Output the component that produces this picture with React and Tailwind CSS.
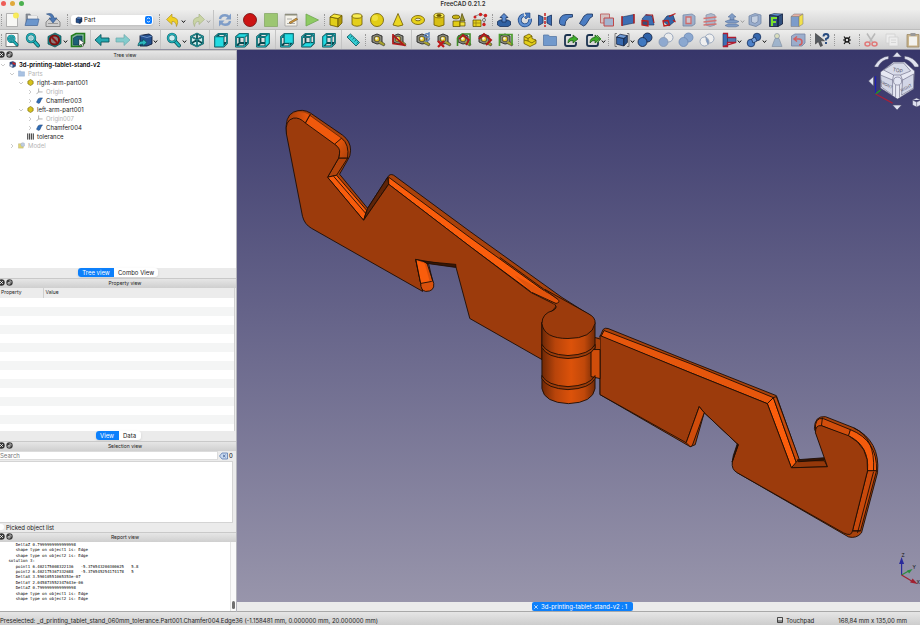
import React from "react";

const DARK = "#101c38";

/* ---------- toolbar glyphs, all on a 16 x 16 grid ---------- */

const Cube = ({ top, left, right, stroke = DARK }) => (
  <g stroke={stroke} strokeWidth="0.8" strokeLinejoin="round">
    <path d="M2 5 10 6.5V15L2 13z" fill={left} />
    <path d="M10 6.5 14 3.5V11L10 15z" fill={right} />
    <path d="M2 5 6 2 14 3.500 10 6.500z" fill={top} />
  </g>
);

const TealFrame = ({ face }) => {
  const faces = {
    front: "M2 5H10.500V14.500H2z",
    top: "M2 5 5.500 2H14L10.500 5z",
    right: "M10.500 5 14 2V11L10.500 14.500z",
    rear: "M5.500 2H14V11H5.500z",
    bottom: "M2 14.500 5.500 11H14L10.500 14.500z",
    left: "M2 5 5.500 2V11L2 14.500z",
  };
  return (
    <g strokeLinejoin="round" fill="none">
      <path d="M2 5H10.500V14.500H2zM2 5 5.500 2H14V11L10.500 14.500M10.500 5 14 2M5.500 2V11H14M5.500 11 2 14.500" stroke="#0a4a50" strokeWidth="1.800" />
      <path d="M2 5H10.500V14.500H2zM2 5 5.500 2H14V11L10.500 14.500M10.500 5 14 2" stroke="#2cc0c8" strokeWidth="0.7" />
      <path d={faces[face]} fill="#22dbe2" stroke="#0c7078" strokeWidth="0.5" />
    </g>
  );
};

const Lens = () => (
  <g>
    <path d="M8.500 8.500 13 13.500" stroke="#0a4a50" strokeWidth="3.800" strokeLinecap="round" />
    <path d="M8.500 8.500 13 13.500" stroke="#1fb4bc" strokeWidth="2.400" strokeLinecap="round" />
    <circle cx="6" cy="6" r="4" fill="#cfeef0" stroke="#0a5c64" strokeWidth="2.400" />
    <circle cx="6" cy="6" r="4" fill="none" stroke="#25b4bc" strokeWidth="1.400" />
  </g>
);

const Tape = ({ children }) => (
  <g>
    <path d="M2 4 7 2 12 4V11L7 12 2 10z" fill="#8c8c80" stroke="#222" strokeWidth="0.9" />
    <circle cx="7" cy="7" r="2.800" fill="#e8c824" stroke="#333" strokeWidth="0.7" />
    <circle cx="6.500" cy="6.500" r="1.200" fill="#eee" />
    <path d="M8 11 14 14 15 12 11 9" fill="#a8a22c" stroke="#333" strokeWidth="0.6" />
    {children}
  </g>
);

const Balls = ({ a = "#2f62a8", b = "#3f78c0", stroke = DARK }) => (
  <g stroke={stroke} strokeWidth="0.8">
    <circle cx="10.500" cy="5.500" r="4.500" fill={a} />
    <circle cx="5.500" cy="10" r="4.500" fill={b} />
  </g>
);

const Share = () => (
  <g fill="none">
    <path d="M8 3H4Q2 3 2 5v7q0 2 2 2h7q2 0 2-2v-2" stroke="#1c3350" strokeWidth="1.800" />
    <path d="M5 11Q5 5.500 10 5.500V3l5 4-5 4V8.500Q7 8 5 11z" fill="#3fae2a" stroke="#155010" strokeWidth="0.7" />
  </g>
);

const blueStroke = { stroke: "#16305c", strokeWidth: 0.8, strokeLinejoin: "round" };
const yellowStroke = { stroke: "#6b5800", strokeWidth: 0.8, strokeLinejoin: "round" };

const glyphs = {
  newDoc: (
    <g>
      <path d="M2.500 1.500h11v13h-11z" fill="#f7f7f5" stroke="#999" strokeWidth="0.7" />
      <circle cx="12" cy="3.500" r="3" fill="#f8ea4c" opacity="0.9" />
    </g>
  ),
  open: (
    <g>
      <path d="M2 2h4l1 2h6v9H2z" fill="#8a9099" stroke="#6c727c" strokeWidth="0.6" />
      <path d="M4 3.500h9V8H4z" fill="#eee" />
      <path d="M3 7h12l-1.500 6.500H1z" fill="#6b96cc" stroke="#48699a" strokeWidth="0.7" />
    </g>
  ),
  save: (
    <g>
      <path d="M1 10 4 7h8l3 3v4.500H1z" fill="#cfcfcf" stroke="#777" strokeWidth="0.8" />
      <path d="M3 11.500h10" stroke="#999" />
      <path d="M1.500 2Q8 0 9 6h3L8 11 4 6h2.500Q6 3 1.500 2z" fill="#4c78b4" stroke="#2d4f80" strokeWidth="0.6" />
    </g>
  ),
  undo: <path d="M7 2 1.500 7.500 7 12.500V9.500Q11 9 11.500 14.500 15.500 6 7 5z" fill="#f0d022" stroke="#a88a20" strokeWidth="0.6" />,
  redo: <path d="M9 2 14.500 7.500 9 12.500V9.500Q5 9 4.500 14.500.5 6 9 5z" fill="#c9d4a4" stroke="#a3ae80" strokeWidth="0.6" />,
  refresh: (
    <g fill="none" stroke="#7f9dc8" strokeWidth="2.400">
      <path d="M3 7Q3.500 3.200 8 3.200 10.500 3.200 12 5.200" />
      <path d="M13 9Q12.500 12.800 8 12.800 5.500 12.800 4 10.800" />
      <path d="M14 1.500V7.500H8.500z" fill="#7f9dc8" stroke="none" />
      <path d="M2 14.500V8.500H7.500z" fill="#7f9dc8" stroke="none" />
    </g>
  ),
  record: <circle cx="8" cy="8" r="6.500" fill="#cc1414" stroke="#6c0808" strokeWidth="0.8" />,
  stop: <path d="M1.500 1.500h13v13h-13z" fill="#9cc672" stroke="#86a868" strokeWidth="0.8" />,
  edit: (
    <g>
      <path d="M2 2h12v12H2z" fill="#f4f2ea" stroke="#999" strokeWidth="0.7" />
      <path d="M2 2h12v1.500H2z" fill="#8d8d7c" />
      <path d="M4 7h5M4 11.500h8" stroke="#999" strokeWidth="0.8" />
      <path d="M6 10.500 13.500 6l1 1.500-7 4z" fill="#d39a3c" stroke="#704c18" strokeWidth="0.6" />
    </g>
  ),
  play: <path d="M2 2 14.500 8 2 14z" fill="#8ecb62" stroke="#6fa550" strokeWidth="0.8" />,
  box: <Cube top="#f7e93c" left="#e2cf18" right="#b39c0c" stroke="#6b5800" />,
  cylinder: (
    <g {...yellowStroke}>
      <path d="M3 4v8.500Q8 16 13 12.500V4" fill="#e4cf1c" />
      <ellipse cx="8" cy="4" rx="5" ry="2.300" fill="#f8ec55" />
    </g>
  ),
  sphere: (
    <g>
      <circle cx="8" cy="8" r="6.500" fill="#e2cd16" {...yellowStroke} />
      <circle cx="6" cy="6" r="3" fill="#f0e03c" />
    </g>
  ),
  cone: <path d="M8 1.500 13 13Q8 15.500 3 13z" fill="#ebd722" {...yellowStroke} />,
  torus: (
    <g {...yellowStroke}>
      <ellipse cx="8" cy="8" rx="6.500" ry="4.500" fill="#e8d31c" />
      <ellipse cx="8" cy="7.500" rx="2.800" ry="1.300" fill="#e4e4e0" />
    </g>
  ),
  tube: (
    <g {...yellowStroke}>
      <path d="M3 3.500V13Q8 16 13 13V3.500" fill="#d8bf14" />
      <ellipse cx="8" cy="3.500" rx="5" ry="2.300" fill="#f8ec55" />
      <ellipse cx="8" cy="3.500" rx="2.300" ry="1" fill="#6b5800" />
    </g>
  ),
  primitives: (
    <g stroke="#554600" strokeWidth="0.7">
      <ellipse cx="5" cy="5" rx="3.800" ry="2" fill="#c8b414" />
      <path d="M11 1.500 14 9H9z" fill="#9c9a30" />
      <path d="M2 9h7v5.500H2z" fill="#e2cd16" />
      <path d="M9 10h5v4H9z" fill="#f0df3c" />
    </g>
  ),
  builder: (
    <g>
      <path d="M1 8h8v6.500H1z" fill="#e6d21c" stroke="#554600" strokeWidth="0.7" />
      <path d="M4 8v6M1 11h8" stroke="#8a7810" strokeWidth="0.7" />
      <path d="M3 4 9 2 13 4 12 12" stroke="#777" strokeWidth="0.8" fill="none" />
      <g fill="#cc2020">
        <circle cx="8.500" cy="2.500" r="1.700" />
        <circle cx="13.500" cy="3.500" r="1.700" />
        <circle cx="3" cy="5" r="1.500" />
        <circle cx="12" cy="12.500" r="1.700" />
      </g>
      <circle cx="12" cy="8" r="1.500" fill="#eee" stroke="#333" strokeWidth="0.6" />
    </g>
  ),
  extrude: (
    <g {...blueStroke}>
      <path d="M1.500 9.500 4 8h8l2.500 1.500V13L12 14.500H4L1.500 13z" fill="#2f60a2" />
      <path d="M8 1.500 12 5.500H10V10H6V5.500H4z" fill="#5b8bd0" />
    </g>
  ),
  revolve: (
    <g>
      <path d="M7 3a5.200 5.200 0 1 0 6 4" fill="none" stroke="#1e4684" strokeWidth="3.800" />
      <path d="M7 3a5.200 5.200 0 1 0 6 4" fill="none" stroke="#5f90d2" strokeWidth="2.400" />
      <path d="M8 1h5v5L11 5 9 7 7.500 5.500 9.500 3.500z" fill="#4678c0" stroke="#1e4684" strokeWidth="0.6" />
    </g>
  ),
  mirror: (
    <g {...blueStroke}>
      <path d="M1.500 3 6 5v6l-4.500 2.500z" fill="#3c6eb4" />
      <path d="M14.500 3 10 5v6l4.500 2.500z" fill="#3c6eb4" />
      <path d="M8 1v14" stroke="#c82828" strokeWidth="1.600" strokeDasharray="3 1" />
    </g>
  ),
  fillet: <path d="M1.500 9Q2 3 8 2.500l6.500 0V5Q10.500 5 9.500 7 7 9 7 13.500L3 13Q1 12 1.500 9z" fill="#4a7cc2" {...blueStroke} />,
  chamfer: <path d="M1.500 11.500 6 4 9 2h5.500V4.500L12 6 8 12.500 5.500 14z" fill="#4a7cc2" {...blueStroke} />,
  makeFace: (
    <g>
      <path d="M1.500 2h9v9h-9z" fill="#d4c2c2" stroke="#c06a6a" />
      <path d="M5 6h9.500v8H5z" fill="#a4b4cf" stroke="#c04848" />
    </g>
  ),
  ruled: (
    <g>
      <path d="M2 5 14 2.500V11L2 13.500z" fill="#3c6eb4" stroke="#16305c" strokeWidth="0.6" />
      <path d="M2 4v10M14 2v9.500" stroke="#b81c1c" strokeWidth="1.400" />
    </g>
  ),
  loft: (
    <g>
      <path d="M2 7 6 2.500 12 4 14 13H9z" fill="#3c6eb4" stroke="#16305c" strokeWidth="0.6" />
      <path d="M2 8.500 8 9V14L2 13z" fill="#3a4c78" stroke="#c01c1c" strokeWidth="1.300" />
      <path d="M5.500 3H12.500L14 11" fill="none" stroke="#a01c24" strokeWidth="1.200" />
    </g>
  ),
  sweep: (
    <g>
      <path d="M2 9 6 4 12 3 14 9 8 14z" fill="#3464a8" stroke="#16305c" strokeWidth="0.7" />
      <path d="M2 9 7 8.500 8.500 13 3 14zM8 4.500 14.500 1.500M12 8l2.500 2" stroke="#c01c1c" strokeWidth="1.300" fill="none" />
    </g>
  ),
  section: (
    <g opacity="0.65">
      <path d="M2 3 11 2 14 4V12L11 14H2z" fill="#7c98c2" stroke="#405c8c" strokeWidth="0.8" />
      <path d="M5 5h5v6.500H5z" fill="#c8b8c4" stroke="#c83232" strokeWidth="1.300" />
    </g>
  ),
  cross: (
    <g opacity="0.7">
      <path d="M4 3 9 1.500 13 3V13L8 14.500 4 13z" fill="#98a8c4" stroke="#57688c" strokeWidth="0.7" />
      <path d="M1.500 6.500 14.500 5M1.500 10 14.500 8.500M1.500 13 14.500 12" stroke="#d04848" strokeWidth="1.300" />
    </g>
  ),
  offset: (
    <g fill="#809cc6" stroke="#54709c" strokeWidth="0.6">
      <path d="M8 1.500 12 5H10V8H6V5H4z" />
      <path d="M1 9.500 5 8h6l4 1.500-3 1.500H4z" />
      <path d="M1 13.500 4 12h8l3 1.500-3 1.300H4z" />
    </g>
  ),
  thickness: (
    <g opacity="0.7">
      <path d="M2 4 8 1.500 14 3V11.500L9 14.500 2 12.500z" fill="#7d9ac8" stroke="#45608c" strokeWidth="0.8" />
      <path d="M4.500 4.500 11 3.500V9.500L8 11.500 4.500 10z" fill="#b9c8e0" stroke="#45608c" strokeWidth="0.7" />
    </g>
  ),
  project: (
    <g>
      <path d="M1.500 3 10 4V14.500H1.500zM10 4 14.500 2V12L10 14.500z" fill="#31507f" stroke={DARK} strokeWidth="0.8" />
      <path d="M1.500 3 6 1.500 14.500 2 10 4z" fill="#5f90d0" stroke={DARK} strokeWidth="0.5" />
      <path d="M4 14V6h5M4 10h4" stroke="#7be02c" strokeWidth="2" fill="none" />
    </g>
  ),
  color: (
    <g stroke="#777" strokeWidth="0.5">
      <path d="M2 4.500h8v10H2z" fill="#7c9cca" />
      <path d="M2 4.500 5 2h9l-4 2.500z" fill="#e6b0a4" />
      <path d="M10 4.500 14 2v10l-4 2.500z" fill="#f2e04c" />
    </g>
  ),

  fitAll: (
    <g>
      <path d="M2 1.500h12v13H2z" fill="#fafafa" stroke="#666" strokeWidth="0.8" />
      <g transform="translate(2.500 2) scale(0.8)">
        <Lens />
        <circle cx="6" cy="6" r="3" fill="#2a9aa4" />
      </g>
    </g>
  ),
  fitSel: <g><Lens /><circle cx="6" cy="6" r="2" fill="#9cccd0" /></g>,
  drawStyle: (
    <g>
      <path d="M1 4.500 8 1 14 4V11.500L8 15 1 12z" fill="#128c90" stroke="#0b4448" strokeWidth="0.7" />
      <circle cx="7.500" cy="8" r="4.600" fill="#8c7c7c" stroke="#7c1010" strokeWidth="2" />
      <path d="M4.500 5 10.500 11" stroke="#8c1414" strokeWidth="2" />
    </g>
  ),
  bbox: (
    <g>
      <path d="M1.500 4 6 1.500H14.500V11L11 14.500H1.500z" fill="#7fb49c" stroke="#237c1c" strokeWidth="1.600" />
      <path d="M3.500 6 7 4h5v6l-3 3H3.500z" fill="#1d5f78" stroke="#0e3444" strokeWidth="0.6" />
      <path d="M9 7v7l2-2 1.500 2.500 1.200-.6L12.500 11.500H15z" fill="#fff" stroke="#222" strokeWidth="0.5" />
    </g>
  ),
  back: <path d="M1 8 7 2.500V6H15v4H7v3.500z" fill="#24a8b0" stroke="#0c565c" strokeWidth="0.9" />,
  forward: <path d="M15 8 9 2.500V6H1v4H9v3.500z" fill="#84cccd" stroke="#6aa8aa" strokeWidth="0.7" />,
  linkNav: (
    <g>
      <path d="M3 3.500 12 2 15 4V12L10 14H3z" fill="#24508e" stroke={DARK} strokeWidth="0.9" />
      <path d="M3 3.500 10 5.500 15 4" fill="none" stroke="#7aa2d8" strokeWidth="0.8" />
      <path d="M1 14Q1 9 6 9V7l4 3.500L6 14V12Q3 12 1 14z" fill="#2cb8c0" stroke="#0c4c54" strokeWidth="0.7" />
    </g>
  ),
  iso: (
    <g fill="#cfeeee" strokeLinejoin="round">
      <path d="M8 1.500 14 4.500V11.500L8 14.500 2 11.500V4.500zM2 4.500 8 7.500 14 4.500M8 1.500V14.500M2 11.500 8 8 14 11.500" stroke="#0a4a50" strokeWidth="1.700" />
      <path d="M8 1.500 14 4.500V11.500L8 14.500 2 11.500V4.500zM2 4.500 8 7.500 14 4.500M8 7.500V14.500" fill="none" stroke="#2cb4ba" strokeWidth="0.7" />
    </g>
  ),
  zoom: <Lens />,
  front: <TealFrame face="front" />,
  top: <TealFrame face="top" />,
  right: <TealFrame face="right" />,
  rear: <TealFrame face="rear" />,
  bottom: <TealFrame face="bottom" />,
  left: <TealFrame face="left" />,
  ruler: (
    <g>
      <path d="M2 5 5.500 2 14.500 10.500 11 14z" fill="#34ccd2" stroke="#0c5c64" strokeWidth="0.9" />
      <path d="M7 4 5.500 5.500M9 6 7.500 7.500M11 8 9.500 9.500M13 10l-1.500 1.500" stroke="#0c5c64" strokeWidth="0.7" />
    </g>
  ),
  m1: <Tape />,
  m2: <Tape><path d="M2 2V11.500L13 13 3 4" fill="none" stroke="#b01818" strokeWidth="1.700" /></Tape>,
  m3: <Tape><path d="M9 5q1-4 4-3l1-1v4h-4M14.500 6q-1 4-4 3" fill="none" stroke="#5f86bc" strokeWidth="1.500" /></Tape>,
  m4: <Tape><path d="M2 9 8 15M8 9 2 15" stroke="#c01818" strokeWidth="2.200" /></Tape>,
  m5: <Tape><path d="M1.500 14V6L6 2h8v11" fill="none" stroke="#3f8c28" strokeWidth="1.600" /><path d="M3 7 7 3 13 8 10 13" fill="none" stroke="#b01818" strokeWidth="1.700" /></Tape>,
  m6: <Tape><path d="M2 7 7 2 14 8 9 13" fill="none" stroke="#b01818" strokeWidth="2" /></Tape>,
  m7: <Tape><path d="M1.500 14V2.500H14V13" fill="none" stroke="#4c9c30" strokeWidth="1.700" /></Tape>,
  part: (
    <g {...yellowStroke}>
      <path d="M2 4.500 7 2 10 4V6.500L14 8V11.500L8 14.500 2 11.500z" fill="#e4cf1a" />
      <path d="M2 4.500 6 6.500 10 4M6 6.500V9L10 11 14 8M6 9 2 8" fill="none" />
    </g>
  ),
  group: <path d="M1.500 3h5l1 1.500h7V13.500h-13z" fill="#7199cc" stroke="#5878a6" strokeWidth="0.8" />,
  share: <Share />,
  shareMany: <g><Share /><path d="M12 3 16 7 12 11" fill="none" stroke="#2c8c1c" strokeWidth="0.9" /></g>,
  compound: (
    <g>
      <path d="M3 1.500H1v13h2M13 1.500h2v13h-2" fill="none" stroke="#666" strokeWidth="0.8" />
      <g transform="translate(.8 .5) scale(.9)"><Cube top="#6f9cd8" left="#3668ae" right="#234c86" /></g>
    </g>
  ),
  bool: <Balls />,
  cut: <Balls a="#ececec" b="#8fa9cf" stroke="#8496b0" />,
  union: <Balls a="#8ba8d0" b="#8ba8d0" stroke="#6c88b2" />,
  inter: (
    <g stroke="#8c9cb4" strokeWidth="0.8">
      <circle cx="10.500" cy="6.500" r="4.500" fill="#efefef" />
      <circle cx="5.500" cy="9.500" r="4.500" fill="#efefef" />
      <path d="M7 5.500Q6.500 8 9 12.500 11 9 7 5.500z" fill="#7898c8" />
    </g>
  ),
  join: (
    <g stroke="#16305c" strokeWidth="0.6">
      <path d="M2 1.500h4.500v13H2z" fill="#3c6eb4" />
      <path d="M6.500 5.500h8.500v5H6.500z" fill="#5078b0" />
      <path d="M2 1.500h4.500v4H15M15 10.500H6.500v4H2z" fill="none" stroke="#b01c30" strokeWidth="1.300" />
    </g>
  ),
  split: (
    <g {...blueStroke}>
      <circle cx="11" cy="5" r="3.800" fill="#3668ae" />
      <circle cx="5" cy="11" r="3.800" fill="#4c80c8" />
      <path d="M5.500 7 9 5 11 9 7 11z" fill="#79a3dc" />
    </g>
  ),
  check: (
    <g opacity="0.75" stroke="#6a7c94" strokeWidth="0.7">
      <circle cx="8" cy="4" r="2.500" fill="#d8ddb0" />
      <path d="M6 6.500h4l3 8H3z" fill="#8ca8c8" />
    </g>
  ),
  defeat: (
    <g opacity="0.8">
      <path d="M1.500 4 5 2h10V11L12 14H1.500z" fill="#8ca2c8" stroke="#5a6c94" strokeWidth="0.8" />
      <path d="M4 7h5q3 0 3 3t-3 3M7 4.500 4 7l3 2.500" fill="none" stroke="#d04040" strokeWidth="1.500" />
    </g>
  ),
  whats: (
    <g>
      <path d="M1.500 1.500V12l2.800-2.500L6.500 14.500l2-1L6.500 8.800h4z" fill="#555a60" stroke="#333" strokeWidth="0.6" />
      <path d="M9.500 4.500Q9.500 2 12 2t2.500 2.500Q14.500 6 12 7v1.500M12 10v2" fill="none" stroke="#284c80" strokeWidth="1.900" />
    </g>
  ),
  star: (
    <g stroke="#111" fill="none">
      <circle cx="8" cy="8" r="2" strokeWidth="1.500" />
      <path d="M5 4.500 6.500 6.500M11 4.500 9.500 6.500M4 8h1.500M12 8h-1.500M5 12l1.500-2M11 12 9.500 10" strokeWidth="1.200" />
    </g>
  ),
  scissors: (
    <g fill="none">
      <path d="M4 1.500 10 11M12 1.500 6 11" stroke="#b8b8b8" strokeWidth="1.500" />
      <ellipse cx="4.500" cy="12" rx="2.500" ry="2" stroke="#e07878" strokeWidth="1.500" />
      <ellipse cx="11.500" cy="12" rx="2.500" ry="2" stroke="#e07878" strokeWidth="1.500" />
    </g>
  ),
  copy: (
    <g stroke="#d0d0d0" strokeWidth="0.8" fill="#ececec">
      <path d="M2 2h9v9H2z" />
      <path d="M5 5h9v9H5zM7 8h5M7 10.500h5" />
    </g>
  ),
  paste: (
    <g>
      <path d="M2 2.500h12v12.500H2z" fill="#c9b48c" stroke="#9c8a68" strokeWidth="0.8" />
      <path d="M4 4.500h8v9H4z" fill="#f2f2ee" />
      <path d="M5.500 1h5v3h-5z" fill="#999" />
    </g>
  ),
};

const Glyph = ({ name }) => (
  <svg viewBox="0 0 16 16" className="h-4 w-4 shrink-0" aria-hidden="true">
    {glyphs[name]}
  </svg>
);

const Group = ({ names, width }) => (
  <div className={`flex shrink-0 ${width}`}>
    {names.split(" ").map((n) => (
      <button key={n} type="button" aria-label={n} className="flex flex-1 items-center justify-center">
        <Glyph name={n} />
      </button>
    ))}
  </div>
);

const Drop = ({ name, faded, width = "w-[25px]", pad = "pl-1" }) => (
  <button type="button" aria-label={name} className={`flex shrink-0 items-center ${width} ${pad}`}>
    <Glyph name={name} />
    <svg viewBox="0 0 5 5" className={`mt-1 h-[5px] w-[5px] shrink-0 ${faded ? "opacity-30" : ""}`} aria-hidden="true">
      <path d="M.8 1.500 2.500 3.500 4.200 1.500" fill="none" stroke="#111" strokeWidth="1" />
    </svg>
  </button>
);

const Sep = () => (
  <div className="flex w-1 shrink-0 justify-center">
    <span className="w-px bg-[#c4c4c4]" />
  </div>
);

const Handle = ({ width = "w-1" }) => (
  <div className={`flex shrink-0 items-center justify-center ${width}`}>
    <span className="h-3 border-l border-dotted border-[#9a9a9a]" />
  </div>
);

function Toolbars() {
  return (
    <>
      <div className="flex h-5 overflow-hidden border-b border-[#bdbdbd] bg-gradient-to-b from-[#ededec] to-[#d0d0d0]">
        <Handle width="w-[2px]" />
        <Group names="newDoc open save" width="w-[61px]" />
        <Handle width="w-2" />
        <div className="my-auto flex h-[10px] w-[82px] shrink-0 items-center rounded-[3px] bg-white shadow-sm">
          <svg viewBox="0 0 16 16" className="ml-1 h-2 w-2 shrink-0" aria-hidden="true">
            <Cube top="#4f80c4" left="#234f8c" right="#173968" />
          </svg>
          <select aria-label="Workbench" className="h-full min-w-0 flex-1 appearance-none bg-transparent pl-px text-[6px] leading-[10px] text-[#222] outline-none" defaultValue="Part">
            <option>Part</option>
          </select>
          <svg viewBox="0 0 7 8" className="mr-px h-2 w-[7px] shrink-0" aria-hidden="true">
            <rect width="7" height="8" rx="2" fill="#0a7bff" />
            <path d="M2 3.200 3.500 1.700 5 3.200M2 4.800 3.500 6.300 5 4.800" fill="none" stroke="#fff" strokeWidth="0.9" />
          </svg>
        </div>
        <Handle width="w-3" />
        <Drop name="undo" width="w-6" pad="pl-0" />
        <Drop name="redo" faded width="w-[22px]" pad="pl-px" />
        <Sep />
        <Group names="refresh" width="w-5" />
        <Handle width="w-[5px]" />
        <Group names="record stop edit play" width="w-[82px]" />
        <Handle />
        <Group names="box cylinder sphere cone torus tube primitives builder" width="w-[164px]" />
        <Handle />
        <Group names="extrude revolve mirror fillet chamfer makeFace ruled loft sweep section cross" width="w-[226px]" />
        <Drop name="offset" faded />
        <Group names="thickness project color" width="w-[62px]" />
      </div>
      <div className="flex h-5 overflow-hidden border-b border-[#8f8fa0] bg-gradient-to-b from-[#ededec] to-[#d0d0d0]">
        <Handle width="w-[2px]" />
        <Group names="fitAll fitSel" width="w-[41px]" />
        <Drop name="drawStyle" />
        <Group names="bbox" width="w-5" />
        <Sep />
        <Group names="back forward" width="w-[41px]" />
        <Drop name="linkNav" />
        <Sep />
        <Drop name="zoom" />
        <Group names="iso" width="w-5" />
        <Sep />
        <Group names="front top right" width="w-[62px]" />
        <Sep />
        <Group names="rear bottom left" width="w-[62px]" />
        <Sep />
        <Group names="ruler" width="w-5" />
        <Handle width="w-[5px]" />
        <Group names="m1 m2" width="w-[41px]" />
        <Sep />
        <Group names="m3 m4 m5 m6 m7" width="w-[103px]" />
        <Handle />
        <Group names="part group share" width="w-[61px]" />
        <Drop name="shareMany" />
        <Handle />
        <Drop name="compound" />
        <Group names="bool cut union inter" width="w-[82px]" />
        <Drop name="join" />
        <Drop name="split" />
        <Group names="check defeat" width="w-[41px]" />
        <Handle />
        <Group names="whats" width="w-5" />
        <Handle width="w-[5px]" />
        <Group names="star" width="w-5" />
        <Handle />
        <Group names="scissors copy paste" width="w-[62px]" />
      </div>
    </>
  );
}

/* ---------- docked panels ---------- */

const DockTitle = ({ children }) => (
  <div className="relative flex h-[10px] shrink-0 items-start justify-center border-t border-[#c9c9c9] bg-gradient-to-b from-[#e6e6e6] to-[#cfcfcf] pl-[14px]">
    <div className="absolute -left-[2px] top-0 flex gap-[1px]">
      <button type="button" aria-label="Close panel" className="h-[7px] w-[7px]">
        <svg viewBox="0 0 7 7">
          <circle cx="3.500" cy="3.500" r="3.200" fill="#333" />
          <path d="M2.200 2.200 4.800 4.800M4.800 2.200 2.200 4.800" stroke="#fff" strokeWidth="0.9" />
        </svg>
      </button>
      <button type="button" aria-label="Float panel" className="h-[7px] w-[7px]">
        <svg viewBox="0 0 7 7">
          <circle cx="3.500" cy="3.500" r="3.200" fill="#3c3c3c" />
          <path d="M2 3.500h2v1.500H2zM3 2h2v1.800" fill="none" stroke="#ddd" strokeWidth="0.7" />
        </svg>
      </button>
    </div>
    <h2 className="text-[5px] leading-[8px] text-[#222]">{children}</h2>
  </div>
);

const Tabs = ({ left, right, first, second }) => (
  <div className="flex h-[10px] shrink-0 justify-center bg-[#ebebeb] text-[6px] leading-[9px]">
    <div className="flex h-[9px] overflow-hidden rounded-[3px] bg-white shadow-sm">
      <button type="button" className={`${left} bg-[#0d80fb] text-center text-white`}>{first}</button>
      <button type="button" className={`${right} text-center text-[#222]`}>{second}</button>
    </div>
  </div>
);

const treeGlyphs = {
  doc: (
    <g>
      <path d="M2 3 9 1 15 4V12L9 15 2 12z" fill="#2b4c88" stroke="#1b2c50" />
      <path d="M8 2 15 5 14 9 8 7z" fill="#c22" />
      <path d="M3 8h5v5H3z" fill="#dfe6f4" />
    </g>
  ),
  folder: <path d="M1 2h5l1 2h8v10H1z" fill="#a9c2e2" stroke="#8fabcf" />,
  part: <path d="M2 5 8 1 14 5V11L8 15 2 11z" fill="#d6c21c" stroke="#7a6a08" strokeWidth="1.500" />,
  origin: <path d="M6 1V9L1 14M6 9H15" fill="none" stroke="#888" strokeWidth="1.500" />,
  chamfer: <path d="M1 12 5 4 9 2H15L12 6 9 13 6 15z" fill="#2f6cb4" stroke="#1b3f74" />,
  sheet: (
    <g>
      <path d="M0 1h16v14H0z" fill="#ddd" />
      <path d="M1.500 1v14M5.800 1v14M10.200 1v14M14.500 1v14" stroke="#333" strokeWidth="2" />
    </g>
  ),
  model: (
    <g opacity="0.75">
      <path d="M1 4h11v10H1z" fill="#d8c840" stroke="#99905a" />
      <circle cx="11" cy="6" r="4.500" fill="#a9bcd8" stroke="#8092b0" />
    </g>
  ),
};

const tree = [
  ["pl-0", "open", "doc", "3d-printing-tablet-stand-v2", "font-semibold text-black"],
  ["pl-[9px]", "open", "folder", "Parts", "text-[#b4b4b4]"],
  ["pl-[18px]", "open", "part", "right-arm-part001", "text-[#1a1a1a]"],
  ["pl-[27px]", "closed", "origin", "Origin", "text-[#b4b4b4]"],
  ["pl-[27px]", "closed", "chamfer", "Chamfer003", "text-[#1a1a1a]"],
  ["pl-[18px]", "open", "part", "left-arm-part001", "text-[#1a1a1a]"],
  ["pl-[27px]", "closed", "origin", "Origin007", "text-[#b4b4b4]"],
  ["pl-[27px]", "closed", "chamfer", "Chamfer004", "text-[#1a1a1a]"],
  ["pl-[18px]", "none", "sheet", "tolerance", "text-[#1a1a1a]"],
  ["pl-[9px]", "closed", "model", "Model", "text-[#b4b4b4]"],
];

const arrows = { open: "M1 2 3 4 5 2", closed: "M2 1 4 3 2 5", none: "" };

const report = [
  "    DeltaZ 0.7999999999999998",
  "    shape type on object1 is: Edge",
  "    shape type on object2 is: Edge",
  " solution 3:",
  "    point1 6.402175008322136   -5.376543200300625   5.8",
  "    point2 6.402175367332688   -5.376545254174178   5",
  "    DeltaX 3.59010551065353e-07",
  "    DeltaY 2.045873552347643e-06",
  "    DeltaZ 0.7999999999999998",
  "    shape type on object1 is: Edge",
  "    shape type on object2 is: Edge",
];

function Sidebar() {
  return (
    <aside className="flex w-[237px] shrink-0 flex-col border-r border-[#b5b5bd] bg-[#ebebeb]">
      <DockTitle>Tree view</DockTitle>
      <ul className="flex-[207] overflow-hidden bg-white text-[6px] leading-[9px]">
        {tree.map(([pad, arrow, icon, label, tone]) => (
          <li key={label} className={`flex h-[9px] items-center ${pad}`}>
            <svg viewBox="0 0 6 6" className="mr-[3px] h-[6px] w-[6px] shrink-0" aria-hidden="true">
              <path d={arrows[arrow]} fill="none" stroke="#b4b4b4" strokeWidth="0.7" />
            </svg>
            <svg viewBox="0 0 16 16" className="mr-[3px] h-[7px] w-[7px] shrink-0" aria-hidden="true">
              {treeGlyphs[icon]}
            </svg>
            <span className={tone}>{label}</span>
          </li>
        ))}
      </ul>
      <Tabs first="Tree view" second="Combo View" left="w-9" right="w-11" />

      <DockTitle>Property view</DockTitle>
      <div className="mr-px flex-[143] overflow-hidden border-r border-[#d0d0d0] bg-white">
        <table className="w-full table-fixed border-collapse text-left text-[5px] leading-[9px]">
          <thead>
            <tr className="h-[10px] bg-[#ececec] text-[#222]">
              <th className="w-[43px] border-r border-[#cfcfcf] p-0 pl-px font-normal">Property</th>
              <th className="p-0 pl-[2px] font-normal">Value</th>
            </tr>
          </thead>
          <tbody>
            {Array.from({ length: 15 }, (_, i) => (
              <tr key={i} className="h-[9px] even:bg-[#f4f5f5]">
                <td className="p-0" />
                <td className="p-0" />
              </tr>
            ))}
          </tbody>
        </table>
      </div>
      <Tabs first="View" second="Data" left="w-[23px]" right="w-[22px]" />

      <DockTitle>Selection view</DockTitle>
      <div className="flex h-[10px] shrink-0 items-center">
        <input
          type="text"
          aria-label="Search"
          placeholder="Search"
          className="h-[9px] min-w-0 flex-1 border border-l-0 border-[#dcdcdc] bg-white p-0 text-[6px] leading-[8px] outline-none placeholder:text-[#777]"
        />
        <button type="button" aria-label="Clear search" className="mx-px h-2 w-[9px]">
          <svg viewBox="0 0 9 8">
            <path d="M.5 4 3 1h5.500v6H3z" fill="#c7d8f0" stroke="#5c7cb0" strokeWidth="0.8" />
            <path d="M4 2.800 6.500 5.200M6.500 2.800 4 5.200" stroke="#3c5c90" strokeWidth="0.8" />
          </svg>
        </button>
        <span className="w-[7px] text-[6px] leading-[8px] text-black">0</span>
      </div>
      <div className="mr-[3px] flex-[60] border border-l-0 border-[#d4d4d4] bg-white" />
      <label className="flex h-[9px] shrink-0 items-center gap-[2px] text-[6px] leading-[9px] text-[#1a1a1a]">
        <input type="checkbox" className="h-[6px] w-1 appearance-none rounded-r-sm bg-white" />
        Picked object list
      </label>

      <DockTitle>Report view</DockTitle>
      <div className="flex h-[70px] shrink-0 border-b border-[#a9a9a9] bg-white">
        <ol className="flex h-[59px] min-w-0 flex-1 flex-col justify-between overflow-hidden pl-[6px] font-['DejaVu_Sans_Mono',monospace] text-[4px] leading-[5px] text-black">
          {report.map((line, i) => (
            <li key={i} className="whitespace-pre">{line}</li>
          ))}
        </ol>
        <div className="flex w-[6px] flex-col justify-end border-l border-[#e4e4e4] bg-[#fafafa] pb-[2px] pl-px">
          <span className="h-2 w-[3px] rounded-full bg-[#6f6f6f]" />
        </div>
      </div>
    </aside>
  );
}

/* ---------- 3D scene ---------- */

function Scene() {
  return (
    <svg viewBox="237 50 683 551" preserveAspectRatio="xMidYMid slice" className="min-h-0 w-full flex-1" role="img" aria-label="Tablet stand model">
      <defs>
        <linearGradient id="sky" x1="0" y1="0" x2="0" y2="1">
          <stop offset="0" stopColor="#37366a" />
          <stop offset="1" stopColor="#9895ab" />
        </linearGradient>
        <linearGradient id="barrel" x1="0" y1="0" x2="1" y2="0">
          <stop offset="0" stopColor="#6e2806" />
          <stop offset="0.25" stopColor="#b8440a" />
          <stop offset="0.55" stopColor="#dc520a" />
          <stop offset="0.8" stopColor="#c0480a" />
          <stop offset="1" stopColor="#722a06" />
        </linearGradient>
        <linearGradient id="bend" x1="0" y1="0" x2="1" y2="1">
          <stop offset="0" stopColor="#f85c0a" />
          <stop offset="1" stopColor="#ac420c" />
        </linearGradient>
        <linearGradient id="nose" x1="0" y1="0" x2="1" y2="0">
          <stop offset="0" stopColor="#9c3b0c" />
          <stop offset="1" stopColor="#f0590c" />
        </linearGradient>
      </defs>
      <rect x="237" y="50" width="683" height="551" fill="url(#sky)" />

      <g stroke="#1d0d04" strokeWidth="0.9" strokeLinejoin="round">
        {/* left arm: edge band, then the flat face over it */}
        <path d="M287 134Q285 116 294 112 303 108 311 113L343 135Q351 141 351 150 351 156 348 160L340 174 368 208 388 177Q390 173 394 175L470 231 562 297 592 316 556 320 470 250 364 220Z" fill="#a8420c" />
        <path d="M287 128Q288 114 298 112 304 111 310 115L307 124 300 120Z" fill="url(#nose)" stroke="none" />
        <path d="M310 115 342 138 336 145 305 124Z" fill="#f0590c" strokeWidth="0.5" />
        <path d="M342 138Q350 144 348 158L339 158Q342 150 335 144Z" fill="url(#bend)" />
        <path d="M339 158 348 158 337 175 328 177Z" fill="#b3440c" />
        <path d="M328 177 337 175 367 210 364 220Z" fill="#f85c0c" />
        <path d="M334 176 366 213" fill="none" />
        <path d="M364 220 368 208 388 177 389 184Z" fill="#5f2408" />
        <path d="M389 184 389 177 470 237 545 291 559 301 532 292 470 246Z" fill="#fa5d0c" />
        <path d="M287 134Q285 120 294 118 300 117 306 123L335 144Q341 148 340 153L339 158 328 177 364 220 389 184 470 246 531 292 557 305 542 322V359L470 318 456 266 416 259 421 283 423 291 312 228Q305 224 303 216Z" fill="#9c3b0c" />
        <path d="M306 123 311 114" fill="none" />
        <path d="M416 259 427 262 434 283Q435 291 426 291 421 290 421 283Z" fill="#d9500c" />
        <path d="M417 260 425 263 430 281 421 283Z" fill="#fa5d0c" stroke="none" />
        <path d="M421 283 432 281M426 262 429 264 433 281M416 259 421 283" fill="none" />
        <path d="M424 261 456 264V267L427 263Z" fill="#3a1604" />

        {/* right arm */}
        <path d="M600 336 603 329Q605 327 608 328L690 361 776 395 799 460 825 458 814 428Q814 415 825 416L853 427Q880 440 877 472L861 532Q856 538 848 536L737 472 732 461 738 444 704 412 695 444 690 446 600 394Z" fill="#a8420c" />
        <path d="M601 336 604 330 690 363 773 397 767 403 690 372Z" fill="#e6560c" />
        <path d="M767 403 773 397 796 462 791 467Z" fill="#fa5d0c" />
        <path d="M773 397 776 396 799 459 796 462Z" fill="#c44a0c" />
        <path d="M791 467 797 460 824 460 827 466Z" fill="#94380a" />
        <path d="M797 459 824 457 825 459 798 461Z" fill="#3a1604" />
        <path d="M815 430Q814 416 823 418L850 429 848 436 821 425Z" fill="#d24e0c" />
        <path d="M850 429Q877 440 876 470L867 470Q869 445 848 435Z" fill="#f45b0c" />
        <path d="M867 470 876 470 860 530 852 530Z" fill="#c8490b" />
        <path d="M873 471 857 532M852 530 860 530M853 427Q875 437 873 470M822 417 821 425" fill="none" />
        <path d="M600 335 690 372 767 403 791 467 827 466 815 432Q815 424 821 425L848 435Q869 446 867 470L852 530Q851 536 843 532L737 472Q731 469 732 461L738 444 704 412 699 406 686 442 600 394Z" fill="#9c3b0c" />
        <path d="M699 406 704 412 692 445 690 446 686 442Z" fill="#d04c0b" />
        <path d="M738 444 732 461 733 455 737 443Z" fill="#3a1604" />

        {/* hinge barrel */}
        <path d="M591 337H600V350H591Z" fill="#a8400a" stroke="none" />
        <path d="M595 337 600 338.500" fill="none" />
        <path d="M542 322V388Q544 402 568.500 403 593 402 595 388V322Z" fill="url(#barrel)" />
        <path d="M591 349 600 349V378L591 376Z" fill="#cf4d0a" />
        <path d="M548 291 588 313Q596 317 595 323 592 338 568 338 544 338 542 323 542 313 554 310 558 309 556 305L551 301Z" fill="#9c3b0c" stroke="none" />
        <path d="M545 289 588 313Q596 317 595 323 592 338 568 338 544 338 542 323 542 313 553 310 558 308 555 304" fill="none" />
        <path d="M532 292 515 275 545 291 558 299Q561 301 558 303L551 301Z" fill="#e2540c" stroke="none" />
        <path d="M532 292 556 303Q561 302 558 299L500 257" fill="none" />
        <path d="M542 344Q547 354 568 355 590 354 595 344V347Q590 357 568 358 547 357 542 347Z" fill="#9c3c0a" />
        <path d="M542 375Q547 385 568 386 590 385 595 375V378Q590 388 568 389 547 388 542 378Z" fill="#9c3c0a" />
      </g>

      {/* navigation cube */}
      <g fill="#dfe1ef" stroke="#4a4a68" strokeWidth="0.5" strokeLinejoin="round">
        <path d="M896.500 52 901 57H892ZM896.500 110 901 105H892ZM868 81 873 76.500V86Z" />
        <path d="M874 66Q879 57 888 56V59Q881 60 878 66L878 67 874 67ZM904 56Q913 57 918 65V67H914Q910 60 904 59Z" />
        <path d="M880 72 893 62 904 62 914 71 913 89 897 99 880 88Z" fill="#e6e8f3" />
        <path d="M883 70 894 63 903 63 910 71 900 75 893 75Z" fill="#d8dbe9" />
        <path d="M880 75 892 80V95L881 87ZM902 80 913 74V88L901 95Z" fill="#d2d6e6" />
        <path d="M893 75 892 80M900 75 902 80M895 85V97M899 85V97" fill="none" />
        <circle cx="897" cy="81" r="4" fill="#e2e5f2" />
        <path d="M912 100 916 98 920 100V105L916 107 912 105ZM912 100 916 102 920 100M916 102V107" />
      </g>
      <g fontFamily="Inter, sans-serif" fontSize="5" fill="#555568">
        <text x="892" y="71" transform="rotate(12 892 71)">TOP</text>
        <text x="879" y="83" fontSize="4" transform="rotate(25 879 83)">FRONT</text>
        <text x="901" y="92" fontSize="4" transform="rotate(-28 901 92)">RIGHT</text>
      </g>
      <path d="M875 94V76" stroke="#2020b8" strokeWidth="1.200" />
      <path d="M875 94 880 90" stroke="#20a020" strokeWidth="1.200" />
      <path d="M875 94 892 103" stroke="#a82038" strokeWidth="1.200" />

      {/* axis cross */}
      <g strokeWidth="1.200">
        <path d="M901 574V560" stroke="#2a2a9c" />
        <path d="M901 556 903.500 563H898.500Z" fill="#2a2a9c" />
        <path d="M901 574 908 570" stroke="#2a8c3c" />
        <path d="M912 568 908.500 572.500 906.500 569.500Z" fill="#2a8c3c" />
        <path d="M901 574 911 580" stroke="#a02030" />
        <path d="M917 583 909.500 581.500 912 577.500Z" fill="#a02030" />
      </g>
      <g fontFamily="Inter, sans-serif" fontSize="5" fill="#111">
        <text x="901" y="556">Z</text>
        <text x="912" y="568">Y</text>
        <text x="916" y="583">X</text>
      </g>
    </svg>
  );
}

export default function App() {
  return (
    <div className="flex h-screen flex-col overflow-hidden bg-[#ebebeb] font-['Inter','Liberation_Sans',sans-serif]">
      <header className="relative flex h-[10px] shrink-0 items-start justify-center bg-[#efefed]">
        <div className="absolute left-px top-[1px] flex gap-[4px]">
          <button type="button" aria-label="Close" className="h-[5px] w-[5px] rounded-full bg-[#ee5d57]" />
          <button type="button" aria-label="Minimise" className="h-[5px] w-[5px] rounded-full bg-[#e0a93c]" />
          <button type="button" aria-label="Zoom window" className="h-[5px] w-[5px] rounded-full bg-[#4cb050]" />
        </div>
        <h1 className="pl-[6px] text-[6px] font-semibold leading-[7px] text-[#333]">FreeCAD 0.21.2</h1>
      </header>
      <Toolbars />
      <div className="flex min-h-0 flex-1">
        <Sidebar />
        <main className="flex min-w-0 flex-1 flex-col">
          <Scene />
          <div className="flex h-[10px] shrink-0 justify-center border-b border-[#a9a9a9] bg-[#ebebeb] pl-2">
            <button type="button" className="flex h-[9px] w-[101px] items-center gap-[3px] rounded-[2px] bg-[#0d80fb] pl-[2px] text-[6px] leading-[9px] text-white">
              <svg viewBox="0 0 4 4" className="h-1 w-1" aria-hidden="true">
                <path d="M.3.300 3.700 3.700M3.700.300.300 3.700" stroke="#fff" strokeWidth="0.7" />
              </svg>
              3d-printing-tablet-stand-v2 : 1
            </button>
          </div>
        </main>
      </div>
      <footer className="flex h-[13px] shrink-0 items-center justify-between bg-gradient-to-b from-[#e6e6e6] to-[#cdcdcd] pr-[13px] pt-[3px] text-[6px] leading-[9px] text-[#222]">
        <span>Preselected: _d_printing_tablet_stand_060mm_tolerance.Part001.Chamfer004.Edge36 (-1.158481 mm, 0.000000 mm, 20.000000 mm)</span>
        <div className="flex gap-[24px]">
          <button type="button" className="flex items-center gap-[3px]">
            <svg viewBox="0 0 6 6" className="h-[6px] w-[6px]" aria-hidden="true">
              <path d="M.5.500h5v5h-5zM.5 4h5" fill="none" stroke="#222" strokeWidth="0.8" />
            </svg>
            Touchpad
          </button>
          <span>168,84 mm x 135,00 mm</span>
        </div>
      </footer>
    </div>
  );
}
